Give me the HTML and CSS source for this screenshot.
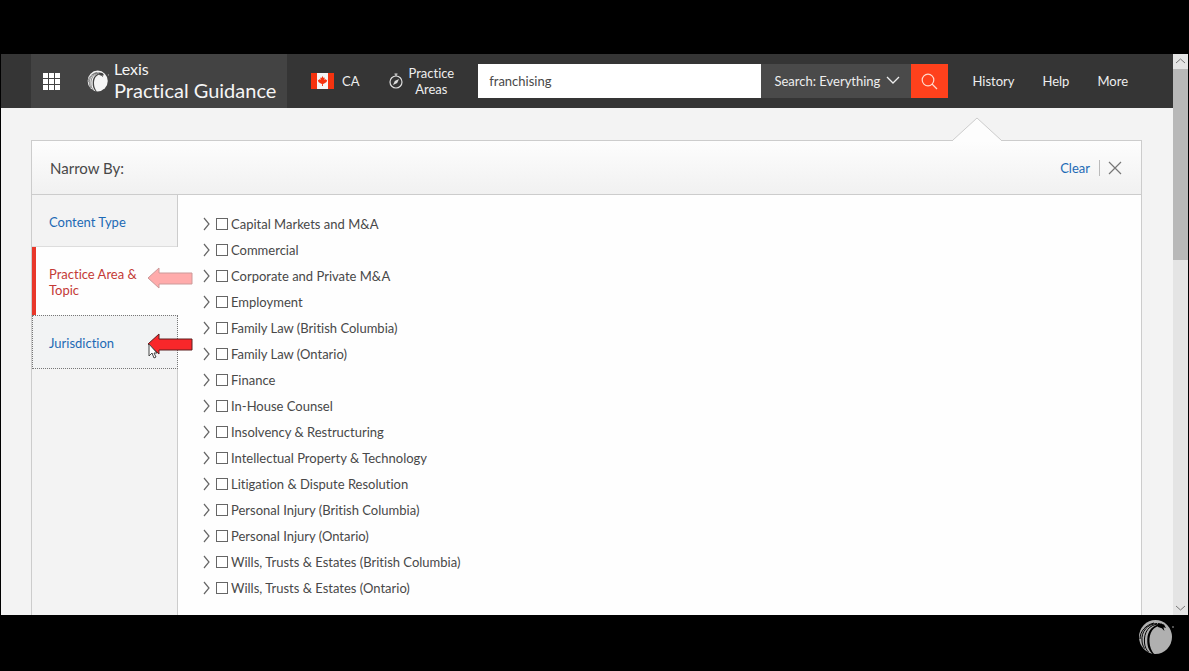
FILE: index.html
```
<!DOCTYPE html>
<html lang="en">
<head>
<meta charset="utf-8">
<title>Lexis Practical Guidance</title>
<link rel="stylesheet" href="styles.css">
</head>
<body>
<svg class="symbols" aria-hidden="true">
  <symbol id="globe" viewBox="0 0 36 36">
    <ellipse cx="17.500" cy="18" rx="16.500" ry="17" fill="currentColor"/>
    <path class="gap" d="M24 6.500C15 7 11 14 11.500 23c.3 5 2 9 4.500 12h-1.500C10.500 31 9 27 9.300 20 9.700 12 14 6 24 4.500z"/>
    <path class="gap-line" d="M22 5C11 5 5.500 13 6.500 24c.4 4 2 7 4 9M19 4.500C9 5 3 13 4 22c.2 3 1 5 2.500 7.500M16 4C8 6 2 12 2 20"/>
    <path class="gap" d="M20 4l6 1.500 2 3.500-2.500-.8.900 3.800-2.600-2.700L20 8z"/>
    <circle cx="35" cy="8" r="1" fill="currentColor" opacity=".6"/>
  </symbol>
  <symbol id="chevron" viewBox="0 0 8 14"><path d="M1 1l5 6-5 6" fill="none" stroke="currentColor" stroke-width="1.2"/></symbol>
  <symbol id="arrow" viewBox="0 0 46 22"><path d="M1 11L12 1v5h33v11H12v4z"/></symbol>
</svg>
<div class="screen">
  <div class="page">
    <header class="topbar">
      <div class="brand">
        <button class="apps" aria-label="Apps">
          <svg width="17" height="17" viewBox="0 0 17 17" fill="#fff"><path d="M0 0h5v5H0zM6 0h5v5H6zM12 0h5v5h-5zM0 6h5v5H0zM6 6h5v5H6zM12 6h5v5h-5zM0 12h5v5H0zM6 12h5v5H6zM12 12h5v5h-5z"/></svg>
        </button>
        <a class="logo" href="#">
          <svg class="mark" width="22" height="22"><use href="#globe"/></svg>
          <span class="name"><span class="small">Lexis</span><span class="large">Practical Guidance</span></span>
        </a>
      </div>
      <button class="country">
        <svg width="23" height="16" viewBox="0 0 23 16"><path fill="#f5f5f5" d="M0 0h23v16H0z"/><path fill="#f5330f" d="M0 0h6v16H0zM17 0h6v16h-6zM11.500 3l1 2 1.200-.5-.3 2.500 1.300-1 .3.900 1.500-.1-1 1.400.5.600-3.200 2-.9.100.1 2h-1l.1-2-.9-.1-3.200-2 .5-.6-1-1.400 1.500.1.300-.9 1.300 1-.3-2.500 1.200.5z"/></svg>
        <span>CA</span>
      </button>
      <button class="areas">
        <svg width="14" height="16" viewBox="0 0 14 16" fill="none" stroke="#ddd" stroke-width="1.200"><circle cx="7" cy="9" r="6"/><path d="M7 3V1M5.500 1h3"/><path d="M10 6L8.200 10 4 12l1.800-4z" fill="#ddd" stroke="none"/></svg>
        <span>Practice<br>Areas</span>
      </button>
      <form class="search">
        <input class="query" type="text" value="franchising" aria-label="Search terms">
        <span class="scope">
          <select aria-label="Search scope"><option>Search: Everything</option></select>
          <svg class="down" width="14" height="8" viewBox="0 0 14 8" fill="none" stroke="#eee" stroke-width="1.300"><path d="M1 1l6 6 6-6"/></svg>
        </span>
        <button class="go" type="button" aria-label="Search">
          <svg width="17" height="17" viewBox="0 0 17 17" fill="none" stroke="#ffd9cc" stroke-width="1.200"><circle cx="7" cy="7" r="5.800"/><path d="M11 11l5 5"/></svg>
        </button>
      </form>
      <nav class="links"><a href="#">History</a><a href="#">Help</a><a href="#">More</a></nav>
    </header>
    <main class="panel">
      <svg class="pointer" width="48" height="24" viewBox="0 0 48 24"><path d="M0 24V23L24 1l24 22v1z" fill="#fdfdfd"/><path d="M0 23L24 1l24 22" fill="none" stroke="#ccc"/></svg>
      <div class="panel-head">
        <h1>Narrow By:</h1>
        <a class="clear" href="#">Clear</a>
        <button class="close" aria-label="Close"><svg width="14" height="14" viewBox="0 0 14 14" stroke="#777" stroke-width="1.200"><path d="M1 1l12 12M13 1L1 13"/></svg></button>
      </div>
      <div class="panel-body">
        <nav class="tabs">
          <a class="tab" href="#">Content Type</a>
          <a class="tab current" href="#">Practice Area &amp; Topic<svg class="arrow faded" width="46" height="22"><use href="#arrow"/></svg></a>
          <a class="tab focused" href="#">Jurisdiction<svg class="arrow" width="46" height="22"><use href="#arrow"/></svg>
            <svg class="cursor" width="10" height="16" viewBox="0 0 10 16"><path d="M1 1v12l3-3 2 5 2-1-2-4h3z" fill="#fff" stroke="#444"/></svg></a>
        </nav>
        <ul class="topics">
          <li><button aria-label="Expand"><svg width="8" height="14"><use href="#chevron"/></svg></button><label><input type="checkbox">Capital Markets and M&amp;A</label></li>
          <li><button aria-label="Expand"><svg width="8" height="14"><use href="#chevron"/></svg></button><label><input type="checkbox">Commercial</label></li>
          <li><button aria-label="Expand"><svg width="8" height="14"><use href="#chevron"/></svg></button><label><input type="checkbox">Corporate and Private M&amp;A</label></li>
          <li><button aria-label="Expand"><svg width="8" height="14"><use href="#chevron"/></svg></button><label><input type="checkbox">Employment</label></li>
          <li><button aria-label="Expand"><svg width="8" height="14"><use href="#chevron"/></svg></button><label><input type="checkbox">Family Law (British Columbia)</label></li>
          <li><button aria-label="Expand"><svg width="8" height="14"><use href="#chevron"/></svg></button><label><input type="checkbox">Family Law (Ontario)</label></li>
          <li><button aria-label="Expand"><svg width="8" height="14"><use href="#chevron"/></svg></button><label><input type="checkbox">Finance</label></li>
          <li><button aria-label="Expand"><svg width="8" height="14"><use href="#chevron"/></svg></button><label><input type="checkbox">In-House Counsel</label></li>
          <li><button aria-label="Expand"><svg width="8" height="14"><use href="#chevron"/></svg></button><label><input type="checkbox">Insolvency &amp; Restructuring</label></li>
          <li><button aria-label="Expand"><svg width="8" height="14"><use href="#chevron"/></svg></button><label><input type="checkbox">Intellectual Property &amp; Technology</label></li>
          <li><button aria-label="Expand"><svg width="8" height="14"><use href="#chevron"/></svg></button><label><input type="checkbox">Litigation &amp; Dispute Resolution</label></li>
          <li><button aria-label="Expand"><svg width="8" height="14"><use href="#chevron"/></svg></button><label><input type="checkbox">Personal Injury (British Columbia)</label></li>
          <li><button aria-label="Expand"><svg width="8" height="14"><use href="#chevron"/></svg></button><label><input type="checkbox">Personal Injury (Ontario)</label></li>
          <li><button aria-label="Expand"><svg width="8" height="14"><use href="#chevron"/></svg></button><label><input type="checkbox">Wills, Trusts &amp; Estates (British Columbia)</label></li>
          <li><button aria-label="Expand"><svg width="8" height="14"><use href="#chevron"/></svg></button><label><input type="checkbox">Wills, Trusts &amp; Estates (Ontario)</label></li>
        </ul>
      </div>
    </main>
  </div>
  <div class="scrollbar">
    <svg width="15" height="15" viewBox="0 0 15 15" fill="none" stroke="#777"><path d="M3 9l4.500-4L12 9"/></svg>
    <div class="thumb"></div>
    <svg class="end" width="15" height="15" viewBox="0 0 15 15" fill="none" stroke="#777"><path d="M3 6l4.500 4L12 6"/></svg>
  </div>
</div>
<footer class="watermark"><svg width="36" height="36"><use href="#globe"/></svg></footer>
</body>
</html>
```
FILE: styles.css
```
* { box-sizing: border-box; }
body {
  margin: 0;
  padding: 54px 1px 0;
  min-height: 100vh;
  display: flex;
  flex-direction: column;
  background: #000;
  color: #484848;
  font: 13px/16px Lato, "Open Sans", sans-serif;
  font-variant-ligatures: none;
}
a { color: #1d6ab5; text-decoration: none; }
svg { display: block; flex: none; }
button { padding: 0; border: 0; background: none; color: inherit; font: inherit; }
.symbols { position: absolute; width: 0; height: 0; }
.gap { fill: var(--gap); }
.gap-line { fill: none; stroke: var(--gap); stroke-width: 1; }
.screen { display: flex; flex: 1; background: #f3f3f3; }
.page { flex: 1; display: flex; flex-direction: column; min-width: 0; }

.topbar { display: flex; align-items: center; height: 54px; padding-left: 30px; background: #353535; color: #eee; }
.brand { --gap: #434343; display: flex; align-items: center; align-self: stretch; width: 256px; background: #434343; }
.apps { display: flex; align-items: center; width: 40px; height: 34px; padding-left: 12px; }
.logo { display: flex; align-items: center; gap: 5px; margin-left: 16px; color: #f5f5f5; }
.name { display: grid; white-space: nowrap; }
.small { font-size: 16px; line-height: 18px; }
.large { font-size: 20px; line-height: 24px; }
.country { display: flex; align-items: center; gap: 8px; margin-left: 24px; }
.areas { display: flex; align-items: center; gap: 6px; margin-left: 29px; }
.search { display: flex; flex: 1; height: 34px; margin-left: 24px; }
.query { flex: 1; min-width: 0; padding: 0 11px; border: 0; background: #fff; color: #484848; font: inherit; }
.scope { position: relative; width: 150px; background: #4a4a4a; }
.scope select { width: 100%; height: 100%; padding: 0 26px 0 13px; border: 0; appearance: none; background: none; color: #eee; font: inherit; }
.down { position: absolute; right: 11px; top: 12px; pointer-events: none; }
.go { display: grid; place-items: center; width: 37px; background: #ff411c; }
.links { display: flex; gap: 28px; padding: 0 45px 0 24px; }
.links a { color: #eee; }

.panel { position: relative; flex: 1; display: flex; flex-direction: column; margin: 32px 31px 0 30px; border: 1px solid #ccc; border-bottom: 0; background: #fefefe; }
.pointer { position: absolute; right: 140px; top: -24px; }
.panel-head { display: flex; align-items: center; height: 54px; padding: 0 19px 0 18px; border-bottom: 1px solid #ccc; background: linear-gradient(#fdfdfd, #f1f1f1); }
.panel-head h1 { flex: 1; margin: 0; font-size: 15px; line-height: 18px; font-weight: 400; }
.clear { padding-right: 9px; border-right: 1px solid #bbb; }
.close { margin-left: 8px; }
.panel-body { flex: 1; display: flex; }
.tabs { width: 146px; border-right: 1px solid #ccc; background: #f3f3f3; }
.tab { position: relative; display: flex; align-items: center; height: 52px; padding: 2px 36px 0 17px; border-bottom: 1px solid #ddd; }
.tab.current { height: 68px; margin-right: -1px; border-left: 4px solid #e8372a; border-bottom: 0; padding-left: 13px; background: #fefefe; color: #c43a36; }
.tab.focused { height: 54px; margin-right: -1px; border: 1px dotted #777; padding-left: 16px; background: #f2f3f4; }
.arrow { position: absolute; left: 114px; top: 17px; fill: #f8272a; stroke: #5c2020; }
.arrow.faded { left: 111px; top: 20px; fill: #ffabab; stroke: #c99; }
.cursor { position: absolute; left: 115px; top: 27px; }
.topics { flex: 1; margin: 0; padding: 16px 0 12px 25px; list-style: none; }
.topics li { display: flex; align-items: center; gap: 5px; height: 26px; }
.topics li button { color: #666; }
.topics label { display: flex; align-items: center; gap: 3px; }
.topics input { width: 12px; height: 12px; margin: 0; border: 1px solid #666; appearance: none; background: #fff; }

.scrollbar { width: 15px; display: flex; flex-direction: column; background: #e4e4e4; }
.thumb { height: 191px; background: #b8b8b8; }
.end { margin-top: auto; }
.watermark { --gap: #000; display: flex; justify-content: flex-end; height: 56px; padding: 4px 14px 0; color: #b0b0b0; }
```
